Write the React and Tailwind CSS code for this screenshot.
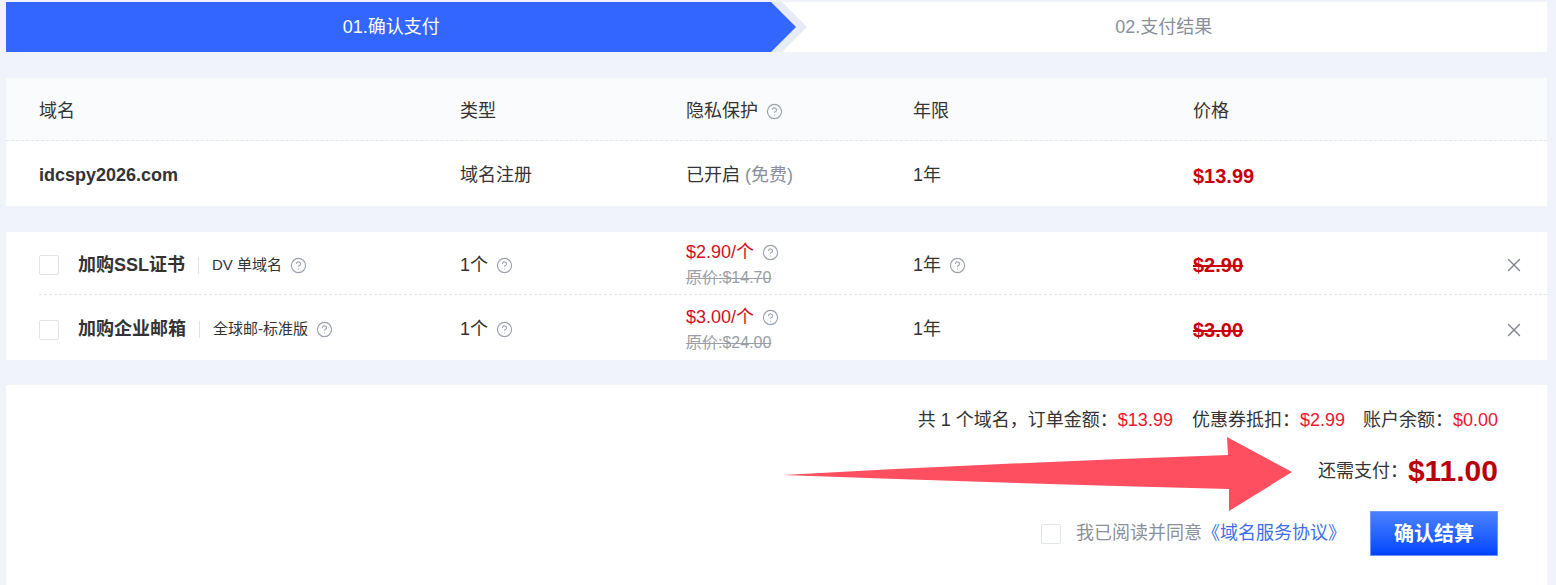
import { CircleHelp, X } from 'lucide-react'

const Help = () => (
  <CircleHelp className="ml-2 inline-block shrink-0 text-[#9aa0ab]" size={17} strokeWidth={1.6} />
)

const Checkbox = ({ className = '' }) => (
  <span className={`inline-block w-[20px] h-[20px] border border-[#dfe3ea] bg-white rounded-[2px] ${className}`} />
)

const cols = 'grid grid-cols-[421px_226px_227px_280px_1fr] items-center'

const addons = [
  {
    name: '加购SSL证书',
    spec: 'DV 单域名',
    qty: '1个',
    unit: '$2.90/个',
    orig: '原价:$14.70',
    term: '1年',
    termHelp: true,
    price: '$2.90',
  },
  {
    name: '加购企业邮箱',
    spec: '全球邮-标准版',
    qty: '1个',
    unit: '$3.00/个',
    orig: '原价:$24.00',
    term: '1年',
    termHelp: false,
    price: '$3.00',
  },
]

export default function App() {
  return (
    <div className="relative w-[1556px] h-[585px] overflow-hidden bg-[#f0f3fa] pt-[2px] pl-[6px] pr-[9px] text-[18px] text-[#333] font-['Liberation_Sans','Noto_Sans_CJK_SC',sans-serif]">
      {/* steps */}
      <div className="flex h-[50px] bg-white">
        <div className="relative w-1/2 bg-[#3366ff] flex items-center justify-center text-white">
          01.确认支付
          <svg className="absolute left-[calc(100%-6px)] top-0 h-[50px] w-[40px]" viewBox="0 0 40 50">
            <polygon points="0,0 11,0 36,25 11,50 0,50" fill="#e6ebf6" />
            <polygon points="0,0 25,25 0,50" fill="#3366ff" />
          </svg>
        </div>
        <div className="w-1/2 flex items-center justify-center text-[#8a8f99] pl-[4px]">02.支付结果</div>
      </div>

      {/* domain table */}
      <div className="mt-[26px] bg-white">
        <div className={`${cols} h-[63px] pt-[4px] pl-[33px] bg-[#fafbfc] border-b border-dashed border-[#e3e6eb]`}>
          <div>域名</div>
          <div>类型</div>
          <div className="flex items-center">隐私保护<Help /></div>
          <div>年限</div>
          <div>价格</div>
        </div>
        <div className={`${cols} h-[65px] pt-[4px] pl-[33px]`}>
          <div className="font-bold">idcspy2026.com</div>
          <div>域名注册</div>
          <div>
            已开启 <span className="text-[#8a8f99]">(免费)</span>
          </div>
          <div>1年</div>
          <div className="text-[20px] font-bold text-[#c8000a]">$13.99</div>
        </div>
      </div>

      {/* add-ons */}
      <div className="mt-[26px] bg-white">
        {addons.map((a, i) => (
          <div
            key={a.name}
            className={`${cols} ml-[33px] pt-[4px] ${i === 0 ? 'h-[63px] border-b border-dashed border-[#e3e6eb]' : 'h-[65px]'}`}
          >
            <div className="flex items-center">
              <Checkbox />
              <span className="ml-[19px] font-bold">{a.name}</span>
              <span className="mx-[13px] h-[17px] w-px bg-[#e2e4e8]" />
              <span className="text-[15px]">{a.spec}</span>
              <Help />
            </div>
            <div className="flex items-center">
              {a.qty}
              <Help />
            </div>
            <div className="flex flex-col leading-[25px]">
              <div className="flex items-center text-[#d0101e]">
                {a.unit}
                <Help />
              </div>
              <div className="text-[16px] text-[#9a9ea6] line-through">{a.orig}</div>
            </div>
            <div className="flex items-center">
              {a.term}
              {a.termHelp && <Help />}
            </div>
            <div className="flex items-center justify-between pr-[22px]">
              <span className="text-[20px] font-bold text-[#c8000a] line-through">{a.price}</span>
              <X size={22} strokeWidth={1.5} className="text-[#7d828c]" />
            </div>
          </div>
        ))}
      </div>

      {/* summary */}
      <div className="mt-[25px] h-[220px] bg-white pr-[49px] pt-[23px] flex flex-col items-end">
        <div className="flex items-center leading-[24px]">
          <span>共 1 个域名，订单金额：</span>
          <span className="text-[#f0142d]">$13.99</span>
          <span className="ml-[19px]">优惠券抵扣：</span>
          <span className="text-[#f0142d]">$2.99</span>
          <span className="ml-[18px]">账户余额：</span>
          <span className="text-[#f0142d]">$0.00</span>
        </div>
        <div className="mt-[21px] flex items-center leading-[36px]">
          <span>还需支付：</span>
          <span className="text-[30px] font-bold text-[#b8000a]">$11.00</span>
        </div>
        <div className="mt-[22px] flex items-center">
          <Checkbox />
          <span className="ml-[15px] text-[#8a8f99]">我已阅读并同意</span>
          <span className="text-[#3d6ee8]">《域名服务协议》</span>
          <button className="ml-[24px] w-[128px] h-[45px] border border-[#6a96ff] bg-linear-to-b from-[#4a80ff] to-[#0042ff] text-white text-[20px] font-bold">
            确认结算
          </button>
        </div>
      </div>

      {/* annotation arrow */}
      <svg className="absolute left-0 top-0 pointer-events-none" width="1556" height="585" viewBox="0 0 1556 585">
        <path
          d="M783 475 Q1000 463 1228 455 L1227 437 L1292 472 L1229 511 L1229 489 Q1000 483 783 475 Z"
          fill="#fd4f5f"
        />
      </svg>
    </div>
  )
}
